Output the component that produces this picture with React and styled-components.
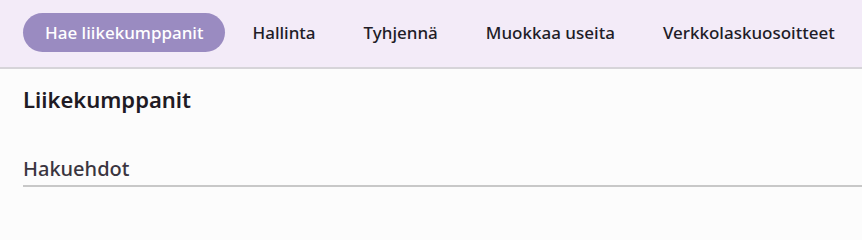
import React from 'react';
import styled, { createGlobalStyle } from 'styled-components';

const GlobalStyle = createGlobalStyle`
  html, body {
    margin: 0;
    padding: 0;
    background: #fcfcfc;
    font-family: "Noto Sans", "Open Sans", sans-serif;
    color: #1f1b24;
  }
`;

const TopBar = styled.nav`
  display: flex;
  align-items: center;
  gap: 6px;
  height: 65px;
  padding: 0 23px 2px;
  background: #f3ebf8;
  border-bottom: 2px solid #d6d4d9;
`;

const NavItem = styled.button`
  height: 39px;
  padding: 0 ${(props) => (props.active ? '22px' : '21px')};
  border: none;
  border-radius: 20px;
  font-family: inherit;
  font-size: 17px;
  font-weight: 500;
  white-space: nowrap;
  cursor: pointer;
  color: ${(props) => (props.active ? '#ffffff' : '#211c27')};
  background: ${(props) => (props.active ? '#9a8bc1' : 'transparent')};
`;

const Content = styled.main`
  padding: 16px 0 0 23px;
`;

const Title = styled.h1`
  margin: 0;
  font-size: 22px;
  font-weight: 600;
  line-height: 28px;
  color: #1f1b24;
`;

const SectionTitle = styled.h2`
  margin: 43px 0 0;
  padding-bottom: 3px;
  font-size: 20px;
  font-weight: 500;
  line-height: 26px;
  color: #3a3540;
  border-bottom: 2px solid #c8c8c8;
`;

const items = ['Hae liikekumppanit', 'Hallinta', 'Tyhjennä', 'Muokkaa useita', 'Verkkolaskuosoitteet'];

function App() {
  return (
    <>
      <GlobalStyle />
      <TopBar>
        {items.map((label, i) => (
          <NavItem key={label} active={i === 0}>{label}</NavItem>
        ))}
      </TopBar>
      <Content>
        <Title>Liikekumppanit</Title>
        <SectionTitle>Hakuehdot</SectionTitle>
      </Content>
    </>
  );
}

export default App;
